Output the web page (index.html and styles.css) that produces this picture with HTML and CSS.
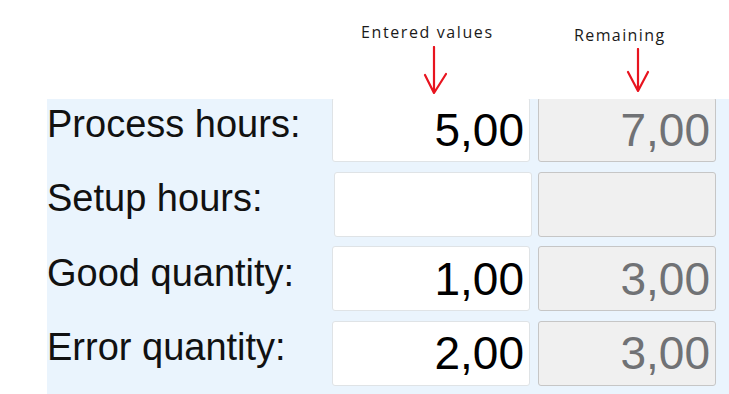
FILE: index.html
```html
<!DOCTYPE html>
<html lang="en">
<head>
    <meta charset="UTF-8">
    <meta name="viewport" content="width=device-width, initial-scale=1.0">
    <title>Entered values and remaining</title>
    <link rel="stylesheet" href="styles.css">
</head>
<body>

    <div class="page">
        <!-- annotation above the two value columns -->
        <div class="notes">
            <div></div>
            <div class="note note-entered">
                <span>Entered values</span>
                <svg width="26" height="48" viewBox="0 0 26 48">
                    <path d="M13 1 L13 46 M4 29 L13 47 L25 28" fill="none" stroke="#e8141f" stroke-width="2.2" stroke-linecap="round" stroke-linejoin="round"/>
                </svg>
            </div>
            <div class="note note-remaining">
                <span>Remaining</span>
                <svg width="24" height="44" viewBox="0 0 24 44">
                    <path d="M12 1 L12 42 M2 24 L12 43 L22 24" fill="none" stroke="#e8141f" stroke-width="2.2" stroke-linecap="round" stroke-linejoin="round"/>
                </svg>
            </div>
        </div>

        <div class="panel">
            <div class="rows">
                <div class="label">Process hours:</div>
                <div class="field">5,00</div>
                <div class="field readonly">7,00</div>

                <div class="label">Setup hours:</div>
                <div class="field shifted"></div>
                <div class="field readonly"></div>

                <div class="label">Good quantity:</div>
                <div class="field">1,00</div>
                <div class="field readonly">3,00</div>

                <div class="label">Error quantity:</div>
                <div class="field">2,00</div>
                <div class="field readonly">3,00</div>
            </div>
        </div>
    </div>

</body>
</html>
```

FILE: styles.css
```css
body {
    margin: 0;
    background: #fff;
    font-family: "Liberation Sans", Arial, sans-serif;
}
.page {
    padding-left: 47px;
}
.notes {
    display: grid;
    grid-template-columns: 277px 198px 178px;
    column-gap: 8px;
    height: 99px;
}
.note {
    display: flex;
    flex-direction: column;
    align-items: flex-start;
    font-family: "Open Sans", sans-serif;
    font-size: 16px;
    line-height: 20px;
    letter-spacing: 1.6px;
    color: #1a1a1a;
}
.note-entered {
    padding-top: 22px;
}
.note-entered span {
    margin-left: 29px;
}
.note-entered svg {
    margin-top: 4px;
    margin-left: 89px;
}
.note-remaining {
    padding-top: 25px;
}
.note-remaining span {
    margin-left: 36px;
    letter-spacing: 1.4px;
}
.note-remaining svg {
    margin-top: 3px;
    margin-left: 88px;
}
.panel {
    background: #eaf4fd;
    height: 295px;
    overflow: hidden;
}
.rows {
    display: grid;
    grid-template-columns: 277px 198px 178px;
    grid-auto-rows: 65px;
    column-gap: 8px;
    row-gap: 9.5px;
    margin-top: -2px;
}
.label {
    display: flex;
    align-items: center;
    padding-bottom: 12px;
    font-size: 38px;
    line-height: 44px;
    color: #111;
}
.field {
    display: flex;
    align-items: center;
    justify-content: flex-end;
    padding-right: 5px;
    background: #fff;
    border: 1px solid #dfe3e6;
    border-radius: 3px;
    font-size: 46px;
    line-height: 1;
    color: #000;
}
.field.shifted {
    margin-left: 2px;
    margin-right: -2px;
}
.field.readonly {
    background: #f0f0f0;
    border: 1.5px solid #c6c6c6;
    color: #707275;
}
```
